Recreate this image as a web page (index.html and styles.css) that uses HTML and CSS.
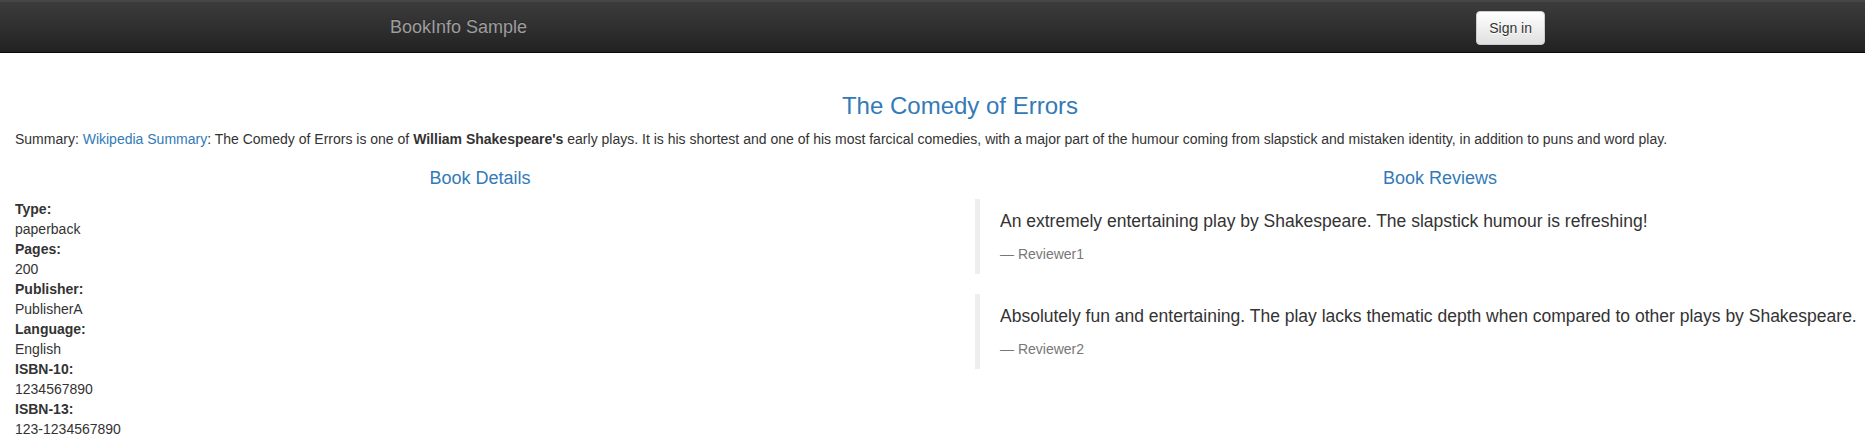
FILE: index.html
```html
<!DOCTYPE html>
<html>
<head>
<meta charset="utf-8">
<title>Simple Bookstore App</title>
<link rel="stylesheet" href="styles.css">
</head>
<body>
<div class="page">
  <nav class="navbar">
    <div class="nav-container">
      <a class="brand" href="#">BookInfo Sample</a>
      <button type="button" class="btn">Sign in</button>
    </div>
  </nav>

  <div class="content">
    <div class="intro">
      <h3 class="title">The Comedy of Errors</h3>
      <p class="summary">Summary: <a href="#">Wikipedia Summary</a>: The Comedy of Errors is one of <b>William Shakespeare's</b> early plays. It is his shortest and one of his most farcical comedies, with a major part of the humour coming from slapstick and mistaken identity, in addition to puns and word play.</p>
    </div>
    <div class="row">
      <div class="col">
        <h4 class="heading">Book Details</h4>
        <dl class="details">
          <dt>Type:</dt><dd>paperback</dd>
          <dt>Pages:</dt><dd>200</dd>
          <dt>Publisher:</dt><dd>PublisherA</dd>
          <dt>Language:</dt><dd>English</dd>
          <dt>ISBN-10:</dt><dd>1234567890</dd>
          <dt>ISBN-13:</dt><dd>123-1234567890</dd>
        </dl>
      </div>
      <div class="col">
        <h4 class="heading">Book Reviews</h4>
        <blockquote class="review">
          <p>An extremely entertaining play by Shakespeare. The slapstick humour is refreshing!</p>
          <small>Reviewer1</small>
        </blockquote>
        <blockquote class="review">
          <p>Absolutely fun and entertaining. The play lacks thematic depth when compared to other plays by Shakespeare.</p>
          <small>Reviewer2</small>
        </blockquote>
      </div>
    </div>
  </div>
</div>
</body>
</html>
```

FILE: styles.css
```css
html, body {
  margin: 0;
  padding: 0;
  overflow: hidden;
  background: #fff;
}

body {
  font-family: "Liberation Sans", Arial, Helvetica, sans-serif;
  font-size: 14px;
  line-height: 1.42857143;
  color: #333;
}

.page {
  width: 1920px;
}

.navbar {
  border-top: 2px solid #474747;
  border-bottom: 1px solid #080808;
  background-image: linear-gradient(to bottom, #3c3c3c 0, #222 100%);
  min-height: 50px;
  margin-bottom: 20px;
}

.nav-container {
  width: 1170px;
  margin: 0 auto;
  padding: 0 15px;
  box-sizing: border-box;
  display: flex;
  justify-content: space-between;
  align-items: flex-start;
  height: 50px;
}

.brand {
  display: block;
  height: 50px;
  box-sizing: border-box;
  padding: 15px;
  margin-left: -15px;
  font-size: 18px;
  line-height: 20px;
  color: #9d9d9d;
  text-decoration: none;
  text-shadow: 0 -1px 0 rgba(0, 0, 0, .25);
}

.btn {
  margin-top: 9px;
  margin-right: -15px;
  padding: 6px 12px;
  font-family: inherit;
  font-size: 14px;
  line-height: 1.42857143;
  color: #333;
  background-image: linear-gradient(to bottom, #fff 0, #e0e0e0 100%);
  border: 1px solid #ccc;
  border-radius: 4px;
  text-shadow: 0 1px 0 #fff;
  box-shadow: inset 0 1px 0 rgba(255, 255, 255, .15), 0 1px 1px rgba(0, 0, 0, .075);
  cursor: pointer;
}

.content {
  display: flow-root;
}

.intro {
  display: flow-root;
  padding: 0 15px;
}

.title {
  margin: 20px 0 10px;
  font-size: 24px;
  font-weight: 500;
  line-height: 1.1;
  text-align: center;
  color: #337ab7;
}

.summary {
  margin: 0 0 10px;
}

.summary a {
  color: #337ab7;
  text-decoration: none;
}

.row {
  display: grid;
  grid-template-columns: 1fr 1fr;
}

.col {
  display: flow-root;
  padding: 0 15px;
  min-width: 0;
}

.heading {
  margin: 10px 0 10px;
  font-size: 18px;
  font-weight: 500;
  line-height: 1.1;
  text-align: center;
  color: #337ab7;
}

.details {
  margin: 0 0 20px;
}

.details dt {
  font-weight: bold;
}

.details dd {
  margin: 0;
}

.review {
  margin: 0 0 20px;
  padding: 10px 20px;
  border-left: 5px solid #eee;
  font-size: 17.5px;
}

.review p {
  margin: 0 0 10px;
  white-space: nowrap;
}

.review small {
  display: block;
  font-size: 80%;
  line-height: 1.42857143;
  color: #777;
}

.review small::before {
  content: "\2014 \00A0";
}
```
